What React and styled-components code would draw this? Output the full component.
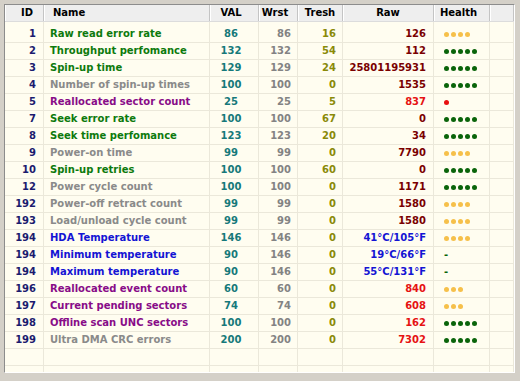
import React from "react";
import styled, { createGlobalStyle } from "styled-components";

const GlobalStyle = createGlobalStyle`
  html, body {
    margin: 0;
    padding: 0;
    background: #d4d0c8;
  }
  body {
    font-family: "DejaVu Sans", Verdana, sans-serif;
  }
`;

const COLS = "39px 166px 49px 39px 45px 91px 56px 1fr";

const C = {
  green: "#0d7a0d",
  gray: "#8a8a8a",
  purple: "#880c88",
  blue: "#1414d4",
  darkred: "#7a0000",
  red: "#e61212",
};

const rows = [
  { id: 1, name: "Raw read error rate", nc: "green", val: 86, wrst: 86, tresh: 16, raw: "126", rc: "darkred", health: [4, "y"] },
  { id: 2, name: "Throughput perfomance", nc: "green", val: 132, wrst: 132, tresh: 54, raw: "112", rc: "darkred", health: [5, "g"] },
  { id: 3, name: "Spin-up time", nc: "green", val: 129, wrst: 129, tresh: 24, raw: "25801195931", rc: "darkred", health: [5, "g"] },
  { id: 4, name: "Number of spin-up times", nc: "gray", val: 100, wrst: 100, tresh: 0, raw: "1535", rc: "darkred", health: [5, "g"] },
  { id: 5, name: "Reallocated sector count", nc: "purple", val: 25, wrst: 25, tresh: 5, raw: "837", rc: "red", health: [1, "r"] },
  { id: 7, name: "Seek error rate", nc: "green", val: 100, wrst: 100, tresh: 67, raw: "0", rc: "darkred", health: [5, "g"] },
  { id: 8, name: "Seek time perfomance", nc: "green", val: 123, wrst: 123, tresh: 20, raw: "34", rc: "darkred", health: [5, "g"] },
  { id: 9, name: "Power-on time", nc: "gray", val: 99, wrst: 99, tresh: 0, raw: "7790", rc: "darkred", health: [4, "y"] },
  { id: 10, name: "Spin-up retries", nc: "green", val: 100, wrst: 100, tresh: 60, raw: "0", rc: "darkred", health: [5, "g"] },
  { id: 12, name: "Power cycle count", nc: "gray", val: 100, wrst: 100, tresh: 0, raw: "1171", rc: "darkred", health: [5, "g"] },
  { id: 192, name: "Power-off retract count", nc: "gray", val: 99, wrst: 99, tresh: 0, raw: "1580", rc: "darkred", health: [4, "y"] },
  { id: 193, name: "Load/unload cycle count", nc: "gray", val: 99, wrst: 99, tresh: 0, raw: "1580", rc: "darkred", health: [4, "y"] },
  { id: 194, name: "HDA Temperature", nc: "blue", val: 146, wrst: 146, tresh: 0, raw: "41°C/105°F", rc: "blue", health: [4, "y"] },
  { id: 194, name: "Minimum temperature", nc: "blue", val: 90, wrst: 146, tresh: 0, raw: "19°C/66°F", rc: "blue", health: null },
  { id: 194, name: "Maximum temperature", nc: "blue", val: 90, wrst: 146, tresh: 0, raw: "55°C/131°F", rc: "blue", health: null },
  { id: 196, name: "Reallocated event count", nc: "purple", val: 60, wrst: 60, tresh: 0, raw: "840", rc: "red", health: [3, "y"] },
  { id: 197, name: "Current pending sectors", nc: "purple", val: 74, wrst: 74, tresh: 0, raw: "608", rc: "red", health: [3, "y"] },
  { id: 198, name: "Offline scan UNC sectors", nc: "purple", val: 100, wrst: 100, tresh: 0, raw: "162", rc: "red", health: [5, "g"] },
  { id: 199, name: "Ultra DMA CRC errors", nc: "gray", val: 200, wrst: 200, tresh: 0, raw: "7302", rc: "red", health: [5, "g"] },
];

const DOT = { y: "#f6c04a", g: "#0a640a", r: "#e81010" };

const Page = styled.div`
  height: 381px;
  padding: 4px 0 0 4px;
  box-sizing: border-box;
  overflow: hidden;
`;

const Frame = styled.div`
  width: 511px;
  height: 369px;
  box-sizing: border-box;
  border: 1px solid;
  border-color: #8c8c8c #ffffff #ffffff #8c8c8c;
  background: #fffdf0;
  display: flex;
  flex-direction: column;
  overflow: hidden;
  font-size: 10px;
  font-weight: bold;
`;

const Header = styled.div`
  display: grid;
  grid-template-columns: ${COLS};
  height: 17px;
  background: #eeeeee;
  border-bottom: 1px solid #dcdcdc;
  box-sizing: border-box;
  flex-shrink: 0;
`;

const HeadCell = styled.div`
  line-height: 16px;
  color: #000;
  text-align: ${(p) => p.$align || "center"};
  padding-left: ${(p) => p.$pl || 0}px;
  padding-right: ${(p) => p.$pr || 0}px;
  border-right: 1px solid #c4c4c4;
  box-shadow: inset 1px 0 0 #fff;
  white-space: nowrap;
`;

const Row = styled.div`
  display: grid;
  grid-template-columns: ${COLS};
  height: ${(p) => p.$h || 17}px;
  flex-shrink: 0;
`;

const Cell = styled.div`
  line-height: 16px;
  height: 100%;
  box-sizing: border-box;
  border-right: 1px solid #ebe8da;
  border-bottom: ${(p) => (p.$nb ? "none" : "1px solid #ebe8da")};
  color: ${(p) => p.$color || "#000"};
  text-align: ${(p) => p.$align || "left"};
  padding-left: ${(p) => p.$pl || 0}px;
  padding-right: ${(p) => p.$pr || 0}px;
  white-space: nowrap;
  overflow: hidden;
`;

const Dots = styled.div`
  display: flex;
  align-items: center;
  gap: 2px;
  height: 16px;
  padding-left: 10px;
`;

const Dot = styled.span`
  width: 5px;
  height: 5px;
  border-radius: 50%;
  background: ${(p) => p.$color};
`;

const Dash = styled.span`
  display: block;
  padding-left: 10px;
  color: #0a640a;
  line-height: 16px;
`;

function Health({ value }) {
  if (!value) return <Dash>-</Dash>;
  const [n, c] = value;
  return (
    <Dots>
      {Array.from({ length: n }).map((_, i) => (
        <Dot key={i} $color={DOT[c]} />
      ))}
    </Dots>
  );
}

function EmptyRow({ h, nb }) {
  return (
    <Row $h={h}>
      {Array.from({ length: 8 }).map((_, i) => (
        <Cell key={i} $nb={nb} />
      ))}
    </Row>
  );
}

export default function App() {
  return (
    <>
      <GlobalStyle />
      <Page>
        <Frame>
          <Header>
            <HeadCell $pl={6}>ID</HeadCell>
            <HeadCell $align="left" $pl={9}>Name</HeadCell>
            <HeadCell $pr={6}>VAL</HeadCell>
            <HeadCell $pr={6}>Wrst</HeadCell>
            <HeadCell>Tresh</HeadCell>
            <HeadCell>Raw</HeadCell>
            <HeadCell $pr={6}>Health</HeadCell>
            <HeadCell />
          </Header>
          <EmptyRow h={4} nb />
          {rows.map((r, i) => (
            <Row key={i}>
              <Cell $align="right" $pr={7} $color="#1b1b6e">{r.id}</Cell>
              <Cell $pl={6} $color={C[r.nc]}>{r.name}</Cell>
              <Cell $align="center" $pr={6} $color="#16797a">{r.val}</Cell>
              <Cell $align="right" $pr={6} $color="#838383">{r.wrst}</Cell>
              <Cell $align="right" $pr={6} $color="#8a8a08">{r.tresh}</Cell>
              <Cell $align="right" $pr={7} $color={C[r.rc]}>{r.raw}</Cell>
              <Cell>
                <Health value={r.health} />
              </Cell>
              <Cell />
            </Row>
          ))}
          <EmptyRow />
          <EmptyRow />
        </Frame>
      </Page>
    </>
  );
}
